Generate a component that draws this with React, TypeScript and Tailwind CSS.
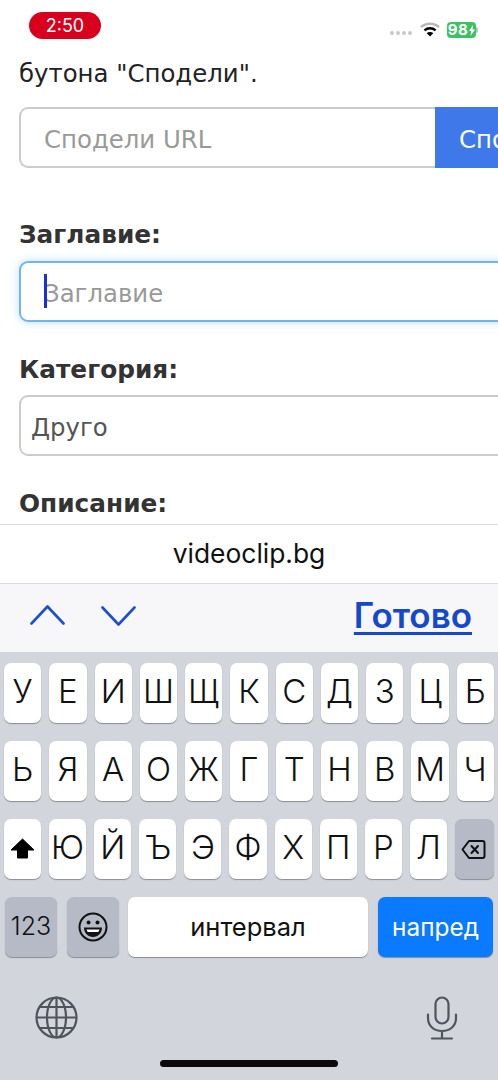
const row1 = ["У","Е","И","Ш","Щ","К","С","Д","З","Ц","Б"];
const row2 = ["Ь","Я","А","О","Ж","Г","Т","Н","В","М","Ч"];
const row3 = ["Ю","Й","Ъ","Э","Ф","Х","П","Р","Л"];

function Key({ label }: { label: string }) {
  return (
    <div className="flex-1 h-[60px] rounded-[7px] bg-white shadow-[0_1px_1px_#8a8d95] flex items-center justify-center text-[33px] font-[350] text-[#111] pb-[2px]">
      {label}
    </div>
  );
}

function Wifi() {
  return (
    <svg width="20" height="15" viewBox="0 0 20 15" className="-mt-[1px]">
      <path d="M1 5.2C6 .6 14 .6 19 5.2" fill="none" stroke="#b8b8b8" strokeWidth="2.4" />
      <path d="M4.4 8.4c3.2-2.8 8-2.8 11.2 0" fill="none" stroke="#000" strokeWidth="2.4" />
      <path d="M10 14.6 6.6 11c2-1.5 4.800-1.500 6.800 0z" fill="#000" />
    </svg>
  );
}

function Battery() {
  return (
    <div className="flex items-center -ml-[1px]">
      <div className="w-[29px] h-[16px] rounded-[4px] bg-[#3cc264] text-white text-[15px] font-bold leading-[16px] flex items-center justify-center gap-[1px] font-['Inter',sans-serif]">
        <span className="tracking-[0.5px]">98</span>
        <svg width="6" height="11" viewBox="0 0 6 11"><path d="M4 0 0 6h2.200L1.500 11 6 4.500H3.500z" fill="#fff" /></svg>
      </div>
      <div className="w-[2px] h-[6px] bg-[#bdbdbd] rounded-r-[2px]" />
    </div>
  );
}

export default function App() {
  return (
    <div className="w-[498px] h-[1080px] overflow-hidden flex flex-col bg-white font-['DejaVu_Sans',sans-serif]" lang="bg">
      {/* web page */}
      <div className="h-[524px] overflow-hidden shrink-0">
        <div className="h-[50px] flex items-start justify-between pl-[29px] pr-[20px] pt-[12px]">
          <div className="w-[72px] h-[27px] rounded-full bg-[#d8001c] text-white text-[18px] leading-[27px] text-center font-['Inter',sans-serif]">2:50</div>
          <div className="flex items-center gap-[8px] mt-[10px]">
            <div className="flex gap-[2px] mt-[6px]">
              <span className="w-[4px] h-[4px] rounded-full bg-[#c8c8c8]" />
              <span className="w-[4px] h-[4px] rounded-full bg-[#c8c8c8]" />
              <span className="w-[4px] h-[4px] rounded-full bg-[#c8c8c8]" />
              <span className="w-[4px] h-[4px] rounded-full bg-[#c8c8c8]" />
            </div>
            <Wifi />
            <Battery />
          </div>
        </div>
        <div className="w-[600px] pl-[19px]">
          <p className="text-[24.4px] leading-[48px] text-[#222] h-[57px]">бутона "Сподели".</p>
          <div className="flex h-[61px] w-[581px]">
            <div className="w-[416px] border-2 border-r-0 border-[#cccccc] rounded-l-[9px] flex items-center pl-[23px] pt-[6px] text-[24.4px] text-[#999]">Сподели URL</div>
            <div className="flex-1 bg-[#3f78e8] text-white text-[24.4px] flex items-center pl-[24px] pt-[6px]">Сподели</div>
          </div>
          <p className="mt-[50px] text-[24.8px] font-bold leading-[34px] text-[#333]">Заглавие:</p>
          <div className="mt-[9px] h-[61px] w-[581px] border-2 border-[#72b5ea] rounded-[9px] shadow-[0_0_10px_#b9def8] flex items-center pl-[23px] pt-[6px] relative text-[24.4px] text-[#999]">
            Заглавие
            <span className="absolute left-[23px] top-[11px] w-[3px] h-[34px] bg-[#1a30d6]" />
          </div>
          <p className="mt-[31px] text-[24.8px] font-bold leading-[34px] text-[#333]">Категория:</p>
          <div className="mt-[8px] h-[61px] w-[581px] border-2 border-[#cccccc] rounded-[9px] flex items-center pl-[10px] pt-[6px] text-[24.4px] text-[#555]">Друго</div>
          <p className="mt-[31px] text-[24.8px] font-bold leading-[34px] text-[#333]">Описание:</p>
        </div>
      </div>

      {/* address bar */}
      <div className="h-[60px] shrink-0 border-y border-[#dcdcde] bg-white flex items-center justify-center text-[26.4px] text-[#111] font-['Inter',sans-serif] pb-[1px]">videoclip.bg</div>

      {/* accessory bar */}
      <div className="h-[68px] shrink-0 bg-[#f7f7f9] flex items-center justify-between pl-[30px] pr-[26px] pb-[7px]">
        <div className="flex items-center gap-[36px]">
          <svg width="35" height="20" viewBox="0 0 35 20"><path d="M1.500 18.500 17.500 1.500 33.500 18.500" fill="none" stroke="#1a4fd0" strokeWidth="2.600" strokeLinecap="round" strokeLinejoin="round" /></svg>
          <svg width="35" height="20" viewBox="0 0 35 20" className="mt-[2px]"><path d="M1.500 1.500 17.500 18.500 33.500 1.500" fill="none" stroke="#1a4fd0" strokeWidth="2.600" strokeLinecap="round" strokeLinejoin="round" /></svg>
        </div>
        <span className="mt-[1px] text-[35px] font-semibold text-[#1449cc] underline underline-offset-[4px] decoration-[3px] font-['Inter',sans-serif]">Готово</span>
      </div>

      {/* keyboard */}
      <div className="flex-1 bg-[#d2d5dc] font-['Inter',sans-serif] relative">
        <div className="px-[4px] pt-[11px] flex flex-col gap-[18px]">
          <div className="flex gap-[8px]">{row1.map((k) => <Key key={k} label={k} />)}</div>
          <div className="flex gap-[8px]">{row2.map((k) => <Key key={k} label={k} />)}</div>
          <div className="flex gap-[8px]">
            <div className="flex-1 h-[60px] rounded-[7px] bg-white shadow-[0_1px_1px_#8a8d95] flex items-center justify-center">
              <svg width="25" height="22" viewBox="0 0 25 22"><path d="M12.500 1 24 12h-6.500v8h-10v-8H1z" fill="#000" stroke="#000" strokeWidth="1" strokeLinejoin="round" /></svg>
            </div>
            {row3.map((k) => <Key key={k} label={k} />)}
            <div className="flex-1 h-[60px] rounded-[7px] bg-[#b5bac6] shadow-[0_1px_1px_#8a8d95] flex items-center justify-center pr-[2px]">
              <svg width="25" height="21" viewBox="0 0 25 21">
                <path d="M8 2h13.500a2 2 0 0 1 2 2v13a2 2 0 0 1-2 2H8l-6.500-8.500z" fill="none" stroke="#111" strokeWidth="2" strokeLinejoin="round" />
                <path d="M10.500 7l6.500 7M17 7l-6.500 7" stroke="#111" strokeWidth="2" strokeLinecap="round" />
              </svg>
            </div>
          </div>
          <div className="flex pl-[1px] h-[60px]">
            <div className="w-[52px] rounded-[7px] bg-[#b5bac6] shadow-[0_1px_1px_#8a8d95] flex items-center justify-center text-[25px] font-light text-[#111]">123</div>
            <div className="w-[52px] ml-[10px] rounded-[7px] bg-[#b5bac6] shadow-[0_1px_1px_#8a8d95] flex items-center justify-center">
              <svg width="30" height="30" viewBox="0 0 30 30">
                <circle cx="15" cy="15" r="13.500" fill="none" stroke="#111" strokeWidth="2" />
                <circle cx="10.500" cy="10.500" r="2" fill="#111" />
                <circle cx="19.500" cy="10.500" r="2" fill="#111" />
                <path d="M6 15.500h18c0 5.500-4 9.500-9 9.500s-9-4-9-9.500z" fill="#111" />
                <path d="M8.500 17.500h13c-.4 1.200-.8 1.800-1.300 2.500H9.800c-.5-.7-1-1.300-1.300-2.500z" fill="#fff" />
              </svg>
            </div>
            <div className="w-[240px] ml-[9px] rounded-[7px] bg-white shadow-[0_1px_1px_#8a8d95] flex items-center justify-center text-[25.5px] text-[#111]">интервал</div>
            <div className="w-[115px] ml-[10px] rounded-[7px] bg-[#0a7aff] shadow-[0_1px_1px_#8a8d95] flex items-center justify-center text-[24.4px] text-white">напред</div>
          </div>
        </div>
        <div className="flex justify-between items-start pl-[35px] pr-[40px] mt-[39px]">
          <svg width="43" height="43" viewBox="0 0 43 43" fill="none" stroke="#50545c" strokeWidth="2.200">
            <circle cx="21.500" cy="21.500" r="20" />
            <ellipse cx="21.500" cy="21.500" rx="9.500" ry="20" />
            <path d="M21.500 1.500v40M1.500 21.500h40M4.500 11h34M4.500 32h34" />
          </svg>
          <svg width="32" height="44" viewBox="0 0 32 44" fill="none" stroke="#50545c" strokeWidth="2.200" strokeLinecap="round">
            <rect x="9.500" y="1.500" width="13" height="26" rx="6.500" />
            <path d="M2 18.500v3.500c0 8 6 13 14 13s14-5 14-13v-3.500M16 35v7.500M6 42.500h20" />
          </svg>
        </div>
        <div className="absolute left-[160px] bottom-[13px] w-[178px] h-[7px] rounded-full bg-[#0a0a0a]" />
      </div>
    </div>
  );
}
